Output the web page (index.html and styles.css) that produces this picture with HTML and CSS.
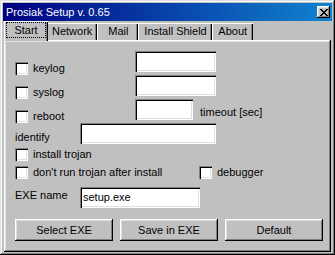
FILE: index.html
```html
<!DOCTYPE html>
<html lang="en">
<head>
    <meta charset="UTF-8">
    <title>Prosiak Setup v. 0.65</title>
    <link rel="stylesheet" href="styles.css">
</head>
<body>

    <div class="window">
        <div class="titlebar">
            <span class="title">Prosiak Setup v. 0.65</span>
            <button type="button" class="close">
                <svg width="8" height="7" viewBox="0 0 8 7" shape-rendering="crispEdges">
                    <path fill="#000" d="M0 0h2v1H0zM6 0h2v1H6zM1 1h2v1H1zM5 1h2v1H5zM2 2h4v1H2zM3 3h2v1H3zM2 4h4v1H2zM1 5h2v1H1zM5 5h2v1H5zM0 6h2v1H0zM6 6h2v1H6z"/>
                </svg>
            </button>
        </div>

        <div class="sheet">
            <div class="tabs">
                <div class="tab active"><span class="focus">Start</span></div>
                <div class="tab">Network</div>
                <div class="tab">Mail</div>
                <div class="tab">Install Shield</div>
                <div class="tab">About</div>
            </div>

            <div class="panel">
                <div class="field-row">
                    <label class="check"><span class="box"></span>keylog</label>
                    <div class="field w-keylog"></div>
                </div>
                <div class="field-row">
                    <label class="check"><span class="box"></span>syslog</label>
                    <div class="field w-keylog"></div>
                </div>
                <div class="field-row">
                    <label class="check"><span class="box"></span>reboot</label>
                    <div class="field w-reboot"></div>
                    <span class="note">timeout [sec]</span>
                </div>
                <div class="field-row identify-row">
                    <span class="label">identify</span>
                    <div class="field w-identify"></div>
                </div>

                <div class="check-row">
                    <label class="check"><span class="box"></span>install trojan</label>
                </div>
                <div class="check-row">
                    <label class="check wide"><span class="box"></span>don't run trojan after install</label>
                    <label class="check"><span class="box"></span>debugger</label>
                </div>

                <div class="field-row exe-row">
                    <span class="label label-exe">EXE name</span>
                    <div class="field w-exe">setup.exe</div>
                </div>

                <div class="buttons">
                    <button type="button" class="btn">Select EXE</button>
                    <button type="button" class="btn">Save in EXE</button>
                    <button type="button" class="btn">Default</button>
                </div>
            </div>
        </div>
    </div>

</body>
</html>
```

FILE: styles.css
```css
* {
    box-sizing: border-box;
}

body {
    margin: 0;
    font-family: 'Liberation Sans', Arial, sans-serif;
    font-size: 11px;
    color: #000;
    background-color: #c0c0c0;
}

.window {
    width: 335px;
    height: 255px;
    padding: 3px;
    background-color: #c0c0c0;
    box-shadow: inset -1px -1px #000, inset 1px 1px #dfdfdf, inset -2px -2px #808080, inset 2px 2px #fff;
}

.titlebar {
    height: 18px;
    display: flex;
    align-items: center;
    justify-content: space-between;
    padding: 0 2px 0 3px;
    background: linear-gradient(to right, #000080, #1084d0);
    color: #fff;
}

.title {
    line-height: 18px;
}

.close {
    width: 13px;
    height: 12px;
    padding: 0;
    border: 0;
    display: flex;
    align-items: center;
    justify-content: center;
    background-color: #c0c0c0;
    box-shadow: inset -1px -1px #000, inset 1px 1px #fff, inset -2px -2px #808080, inset 2px 2px #dfdfdf;
}

.sheet {
    margin: 0 1px;
}

/* tab strip */
.tabs {
    display: flex;
    align-items: flex-end;
    height: 19px;
    padding-left: 2px;
}

.tab {
    height: 17px;
    min-width: 41px;
    padding: 0 5px;
    text-align: center;
    line-height: 15px;
    white-space: nowrap;
    border-top: 1px solid #fff;
    border-left: 1px solid #fff;
    box-shadow: inset -1px 0 #000, inset -2px 0 #808080;
}

.tab.active {
    height: 20px;
    min-width: 44px;
    margin: 0 -2px -1px -2px;
    padding: 0 2px 0 1px;
    position: relative;
    z-index: 1;
    background-color: #c0c0c0;
}

.focus {
    display: block;
    height: 16px;
    line-height: 14px;
    border: 1px dotted #000;
}

/* page */
.panel {
    height: 212px;
    display: flex;
    flex-direction: column;
    padding: 11px 0 0 11px;
    box-shadow: inset -1px -1px #000, inset 1px 1px #fff, inset -2px -2px #808080, inset 2px 2px #dfdfdf;
}

.field-row {
    display: flex;
    align-items: flex-start;
    height: 21px;
    margin-bottom: 3px;
}

.field-row .check {
    width: 120px;
    margin-top: 11px;
}

.identify-row {
    margin-bottom: 4px;
}

.check {
    display: flex;
    align-items: center;
    gap: 5px;
    line-height: 13px;
    white-space: nowrap;
}

.check.wide {
    width: 184px;
}

.box {
    width: 13px;
    height: 13px;
    flex-shrink: 0;
    background-color: #fff;
    box-shadow: inset 1px 1px #808080, inset 2px 2px #000, inset -1px -1px #fff, inset -2px -2px #dfdfdf;
}

.check-row {
    display: flex;
    height: 13px;
    margin-bottom: 5px;
}

.label {
    width: 65px;
    margin-top: 8px;
    line-height: 13px;
}

.label-exe {
    margin-top: 2px;
}

.note {
    margin: 7px 0 0 7px;
    line-height: 13px;
}

.field {
    height: 21px;
    padding: 0 3px;
    line-height: 21px;
    background-color: #fff;
    box-shadow: inset 1px 1px #808080, inset 2px 2px #000, inset -1px -1px #fff, inset -2px -2px #dfdfdf;
}

.w-keylog {
    width: 81px;
}

.w-reboot {
    width: 58px;
}

.w-identify {
    width: 136px;
}

.w-exe {
    width: 120px;
}

.exe-row {
    margin-top: 3px;
    margin-bottom: 11px;
}

.buttons {
    display: flex;
    gap: 7px;
}

.btn {
    width: 98px;
    height: 22px;
    padding: 0;
    border: 0;
    font: inherit;
    color: #000;
    background-color: #c0c0c0;
    box-shadow: inset -1px -1px #000, inset 1px 1px #fff, inset -2px -2px #808080, inset 2px 2px #dfdfdf;
}
```
